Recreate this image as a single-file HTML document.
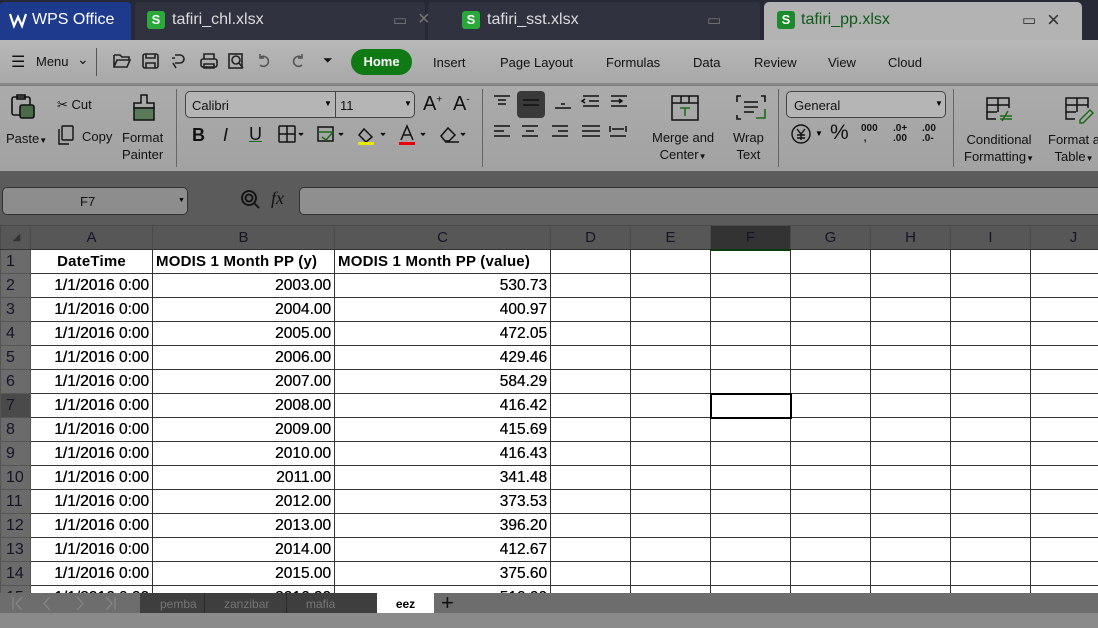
<!DOCTYPE html>
<html><head><meta charset="utf-8"><style>
*{margin:0;padding:0;box-sizing:border-box}
body{width:1098px;height:628px;overflow:hidden;position:relative;font-family:"Liberation Sans",sans-serif;background:#7a7a7a}
.a{position:absolute}
.t{font-size:13px;color:#111}
svg{position:absolute;overflow:visible}
table{border-collapse:collapse;table-layout:fixed;position:absolute;left:0;top:225px}
td{border:1px solid #333;height:24px;font-size:15.5px;color:#000;background:#fff;padding:0 3px;white-space:nowrap;overflow:hidden;text-shadow:0.3px 0 0 #000}
td.h{background:#6b6b6b;color:#15152a;text-align:left;padding-left:5px;border-color:#555;font-size:16px;text-shadow:none}
tr.ch td{background:#575757;color:#15152a;text-align:center;border-color:#4a4a4a;border-bottom:1px solid #333;font-size:15px;text-shadow:none}
td.r{text-align:right}
td.c{text-align:center}
tr.hd td:not(.h){font-weight:bold;font-size:15px;letter-spacing:0.2px;text-shadow:none}
</style></head><body>
<!-- tab bar -->
<div class="a" style="left:0;top:0;width:1098px;height:40px;background:#272a36"></div>
<div class="a" style="left:0;top:2px;width:131px;height:38px;background:#1e3a8c;border-radius:4px 4px 0 0"></div>
<svg style="left:9px;top:13px" width="18" height="14"><path d="M1 1 L5 13 L9 4 L13 13 L17 1" fill="none" stroke="#fff" stroke-width="2.2"/></svg>
<div class="a" style="left:32px;top:11px;color:#fff;font-size:16px">WPS Office</div>
<div class="a" style="left:135px;top:2px;width:290px;height:38px;background:#30333f;border-radius:4px 4px 0 0"></div>
<div class="a" style="left:147px;top:11px;width:18px;height:18px;background:#2aa83a;border-radius:3px;color:#fff;font-size:13px;text-align:center;line-height:18px;font-weight:bold">S</div>
<div class="a" style="left:172px;top:11px;color:#ddd;font-size:16px">tafiri_chl.xlsx</div>
<div class="a" style="left:393px;top:11px;color:#777;font-size:15px">▭</div>
<div class="a" style="left:418px;top:8px;color:#777;font-size:20px">×</div>
<div class="a" style="left:428px;top:2px;width:332px;height:38px;background:#30333f;border-radius:4px 4px 0 0"></div>
<div class="a" style="left:462px;top:11px;width:18px;height:18px;background:#2aa83a;border-radius:3px;color:#fff;font-size:13px;text-align:center;line-height:18px;font-weight:bold">S</div>
<div class="a" style="left:487px;top:11px;color:#ddd;font-size:16px">tafiri_sst.xlsx</div>
<div class="a" style="left:707px;top:11px;color:#777;font-size:15px">▭</div>
<div class="a" style="left:764px;top:2px;width:318px;height:40px;background:#b3b3b3;border-radius:5px 5px 0 0"></div>
<div class="a" style="left:777px;top:11px;width:18px;height:18px;background:#1a8a2a;border-radius:3px;color:#fff;font-size:13px;text-align:center;line-height:18px;font-weight:bold">S</div>
<div class="a" style="left:801px;top:11px;color:#0d5a1a;font-size:16px">tafiri_pp.xlsx</div>
<div class="a" style="left:1022px;top:11px;color:#333;font-size:15px">▭</div>
<div class="a" style="left:1047px;top:7px;color:#333;font-size:22px">×</div>
<!-- menu row -->
<div class="a" style="left:0;top:40px;width:1098px;height:45px;background:linear-gradient(#b8b8b8,#a8a8a8);border-bottom:2px solid #8a8a8a"></div>
<div class="a t" style="left:11px;top:52px;font-size:16px">☰</div>
<div class="a t" style="left:36px;top:54px">Menu</div>
<div class="a t" style="left:77px;top:51px;font-size:14px">⌄</div>
<div class="a" style="left:96px;top:48px;width:1px;height:28px;background:#555"></div>
<svg style="left:113px;top:52px" width="160" height="18" fill="none" stroke="#222" stroke-width="1.6">
<path d="M1 3h6l2 2h7v3M1 3v12h13l3-7H4l-3 7"/>
<rect x="30" y="2" width="15" height="14" rx="2"/><path d="M33 2v4h9V2M33 16v-5h9v5"/>
<path d="M62 3h5a4 4 0 0 1 0 8h-5M60 11l3 5M59 6h3"/>
<rect x="88" y="7" width="16" height="8" rx="2"/><path d="M91 7V2h10v5M91 12h10v4H91z"/>
<rect x="116" y="2" width="13" height="14"/><circle cx="123" cy="8" r="4"/><path d="M126 11l4 5"/>
<path d="M148 5a5 5 0 1 1-1 8M147 2v4h4" stroke="#555"/>
</svg>
<svg style="left:288px;top:52px" width="20" height="18" fill="none" stroke="#555" stroke-width="1.6"><path d="M13 5a5 5 0 1 0 1 8M14 2v4h-4"/></svg>
<div class="a t" style="left:323px;top:53px;font-size:12px">⏷</div>
<div class="a" style="left:351px;top:49px;width:61px;height:26px;background:#0f7a14;border-radius:13px;color:#fff;font-weight:bold;font-size:13px;text-align:center;line-height:26px">Home</div>
<div class="a t" style="left:433px;top:55px">Insert</div>
<div class="a t" style="left:500px;top:55px">Page Layout</div>
<div class="a t" style="left:606px;top:55px">Formulas</div>
<div class="a t" style="left:693px;top:55px">Data</div>
<div class="a t" style="left:754px;top:55px">Review</div>
<div class="a t" style="left:828px;top:55px">View</div>
<div class="a t" style="left:888px;top:55px">Cloud</div>
<!-- ribbon -->
<div class="a" style="left:0;top:86px;width:1098px;height:85px;background:linear-gradient(#ababab,#a2a2a2)"></div>
<svg style="left:11px;top:94px" width="24" height="26" fill="none" stroke="#111" stroke-width="1.6"><rect x="1" y="3" width="18" height="18" rx="2"/><rect x="6" y="1" width="8" height="4"/><rect x="9" y="11" width="14" height="13" rx="2" fill="#4a6a4a"/></svg>
<div class="a t" style="left:6px;top:131px">Paste<span style="font-size:8px">▼</span></div>
<div class="a t" style="left:57px;top:97px">✂ Cut</div>
<svg style="left:58px;top:125px" width="16" height="20" fill="none" stroke="#111" stroke-width="1.4"><rect x="4" y="1" width="11" height="14" rx="1"/><path d="M1 4v15h10"/></svg>
<div class="a t" style="left:82px;top:129px">Copy</div>
<svg style="left:131px;top:94px" width="26" height="28" fill="none" stroke="#111" stroke-width="1.5"><path d="M10 1h6v8h7v5H3V9h7z"/><rect x="3" y="14" width="20" height="12" fill="#5a7a5a"/></svg>
<div class="a t" style="left:122px;top:129px;text-align:center;line-height:17px">Format<br>Painter</div>
<div class="a" style="left:176px;top:89px;width:1px;height:78px;background:#666"></div>
<div class="a" style="left:185px;top:91px;width:230px;height:27px;border:1px solid #444;border-radius:5px;background:#b5b5b5"></div>
<div class="a" style="left:335px;top:91px;width:1px;height:27px;background:#444"></div>
<div class="a t" style="left:192px;top:98px">Calibri</div>
<div class="a t" style="left:340px;top:98px">11</div>
<div class="a" style="left:324px;top:99px;font-size:8px">▼</div>
<div class="a" style="left:404px;top:99px;font-size:8px">▼</div>
<div class="a t" style="left:423px;top:93px;font-size:20px">A<sup style="font-size:10px">+</sup></div>
<div class="a t" style="left:453px;top:93px;font-size:20px">A<sup style="font-size:10px">-</sup></div>
<div class="a t" style="left:192px;top:125px;font-size:18px;font-weight:bold">B</div>
<div class="a t" style="left:223px;top:125px;font-size:18px;font-style:italic">I</div>
<div class="a t" style="left:249px;top:124px;font-size:18px;text-decoration:underline;text-decoration-color:#1a6a1a">U</div>
<svg style="left:278px;top:125px" width="200" height="22" fill="none" stroke="#111" stroke-width="1.5">
<rect x="1" y="1" width="16" height="16" rx="1"/><path d="M9 1v16M1 9h16"/><path d="M21 8l2 2 2-2" fill="#111"/>
<rect x="40" y="2" width="15" height="14"/><path d="M40 7h15M44 12l4 3 7-8" stroke="#1a6a1a"/><path d="M61 8l2 2 2-2" fill="#111"/>
<path d="M86 4l8 8-6 5-7-7z"/><rect x="80" y="17" width="16" height="3" fill="#e8e800" stroke="none"/><path d="M103 8l2 2 2-2" fill="#111"/>
<path d="M123 15l6-14 6 14M125 10h8"/><rect x="121" y="17" width="16" height="3" fill="#e00" stroke="none"/><path d="M143 8l2 2 2-2" fill="#111"/>
<path d="M163 11l7-8 7 7-6 6h-4z M167 17h14"/><path d="M183 8l2 2 2-2" fill="#111"/>
</svg>
<div class="a" style="left:482px;top:89px;width:1px;height:78px;background:#666"></div>
<svg style="left:492px;top:94px" width="140" height="56" fill="none" stroke="#111" stroke-width="1.5">
<path d="M2 2h16M6 6h8M6 10h8"/>
<rect x="25" y="-3" width="28" height="27" rx="4" fill="#3a3a3a" stroke="none"/><path d="M31 6h16M31 11h16" stroke="#111"/>
<path d="M63 14h16M69 10h4"/>
<path d="M91 2h16M97 7h10M91 12h16M93 5l-3 2 3 2" stroke="#111"/>
<path d="M119 2h16M119 7h10M119 12h16M127 5l3 2-3 2" stroke="#111"/>
<path d="M2 32h16M2 37h10M2 42h16"/>
<path d="M30 32h16M34 37h8M30 42h16"/>
<path d="M60 32h16M66 37h10M60 42h16"/>
<path d="M90 32h18M90 37h18M90 42h18"/>
<path d="M118 32v6M134 32v6M120 35h12M118 42h16" stroke="#111"/>
</svg>
<svg style="left:671px;top:95px" width="28" height="28" fill="none" stroke="#111" stroke-width="1.5"><rect x="1" y="1" width="26" height="24"/><path d="M1 8h26M10 1v7M18 1v7"/><path d="M9 13h10M14 13v8" stroke="#1a6a1a"/></svg>
<div class="a t" style="left:652px;top:129px;text-align:center;line-height:17px">Merge and<br>Center<span style="font-size:8px">▼</span></div>
<svg style="left:736px;top:95px" width="30" height="28" fill="none" stroke="#111" stroke-width="1.6"><path d="M5 1H1v6M25 1h4v6M1 20v4h4M8 7h14M8 12h14M8 17h10"/><path d="M29 14v9H20" stroke="#1a6a1a"/></svg>
<div class="a t" style="left:733px;top:129px;text-align:center;line-height:17px">Wrap<br>Text</div>
<div class="a" style="left:778px;top:89px;width:1px;height:78px;background:#666"></div>
<div class="a" style="left:786px;top:91px;width:160px;height:27px;border:1px solid #444;border-radius:5px;background:#b5b5b5"></div>
<div class="a t" style="left:794px;top:98px">General</div>
<div class="a" style="left:935px;top:99px;font-size:8px">▼</div>
<svg style="left:791px;top:124px" width="20" height="20" fill="none" stroke="#111" stroke-width="1.4"><circle cx="10" cy="10" r="9"/><path d="M6 5l4 5 4-5M10 10v6M6 11h8M6 14h8"/></svg>
<div class="a" style="left:815px;top:129px;font-size:8px">▼</div>
<div class="a t" style="left:830px;top:121px;font-size:21px">%</div>
<div class="a t" style="left:861px;top:124px;font-size:10px;font-weight:bold;line-height:10px">000<br>&nbsp;,</div>
<div class="a t" style="left:893px;top:124px;font-size:10px;font-weight:bold;line-height:10px">.0+<br>.00</div>
<div class="a t" style="left:922px;top:124px;font-size:10px;font-weight:bold;line-height:10px">.00<br>.0-</div>
<div class="a" style="left:953px;top:89px;width:1px;height:78px;background:#666"></div>
<svg style="left:986px;top:97px" width="30" height="26" fill="none" stroke="#111" stroke-width="1.5"><path d="M10 22H1V1h22v10M1 8h22M1 15h10M12 1v14"/><path d="M14 19h12M16 24l6-10M14 22h12" stroke="#1a6a1a"/></svg>
<div class="a t" style="left:964px;top:131px;text-align:center;line-height:17px">Conditional<br>Formatting<span style="font-size:8px">▼</span></div>
<svg style="left:1065px;top:97px" width="30" height="26" fill="none" stroke="#111" stroke-width="1.5"><path d="M10 22H1V1h22v10M1 8h22M1 15h10M12 1v14"/><path d="M15 23l10-10 3 3-10 10h-3z" stroke="#1a6a1a"/></svg>
<div class="a t" style="left:1048px;top:131px;text-align:center;line-height:17px;white-space:nowrap">Format a<br>Table<span style="font-size:8px">▼</span></div>
<!-- formula bar -->
<div class="a" style="left:0;top:171px;width:1098px;height:54px;background:#5b5b5b"></div>
<div class="a" style="left:2px;top:187px;width:186px;height:28px;background:#8d8d8d;border:1px solid #333;border-radius:5px"></div>
<div class="a t" style="left:80px;top:194px">F7</div>
<div class="a" style="left:178px;top:197px;font-size:7px">▼</div>
<svg style="left:241px;top:190px" width="22" height="22" fill="none" stroke="#111" stroke-width="1.8"><circle cx="8" cy="8" r="7"/><circle cx="8" cy="8" r="3.5"/><path d="M13 13l5 5"/></svg>
<div class="a t" style="left:271px;top:188px;font-size:18px;font-style:italic;font-family:'Liberation Serif',serif">fx</div>
<div class="a" style="left:299px;top:187px;width:810px;height:28px;background:#8f8f8f;border:1px solid #333;border-radius:5px"></div>
<!-- grid -->
<table style="width:1116px">
<colgroup><col style="width:30px"><col style="width:122px"><col style="width:182px"><col style="width:216px"><col style="width:80px"><col style="width:80px"><col style="width:80px"><col style="width:80px"><col style="width:80px"><col style="width:80px"><col style="width:86px"></colgroup>
<tr class="ch"><td class="h" style="background:#575757;font-size:10px;color:#333">◢</td><td>A</td><td>B</td><td>C</td><td>D</td><td>E</td><td style="background:#333;border-bottom:2px solid #0a3a0a">F</td><td>G</td><td>H</td><td>I</td><td>J</td></tr>
<tr class="hd"><td class="h">1</td><td class="c">DateTime</td><td>MODIS 1 Month PP (y)</td><td>MODIS 1 Month PP (value)</td><td></td><td></td><td></td><td></td><td></td><td></td><td></td></tr>
<tr><td class="h">2</td><td class="r">1/1/2016 0:00</td><td class="r">2003.00</td><td class="r">530.73</td><td></td><td></td><td></td><td></td><td></td><td></td><td></td></tr>
<tr><td class="h">3</td><td class="r">1/1/2016 0:00</td><td class="r">2004.00</td><td class="r">400.97</td><td></td><td></td><td></td><td></td><td></td><td></td><td></td></tr>
<tr><td class="h">4</td><td class="r">1/1/2016 0:00</td><td class="r">2005.00</td><td class="r">472.05</td><td></td><td></td><td></td><td></td><td></td><td></td><td></td></tr>
<tr><td class="h">5</td><td class="r">1/1/2016 0:00</td><td class="r">2006.00</td><td class="r">429.46</td><td></td><td></td><td></td><td></td><td></td><td></td><td></td></tr>
<tr><td class="h">6</td><td class="r">1/1/2016 0:00</td><td class="r">2007.00</td><td class="r">584.29</td><td></td><td></td><td></td><td></td><td></td><td></td><td></td></tr>
<tr><td class="h" style="background:#4a4a4a">7</td><td class="r">1/1/2016 0:00</td><td class="r">2008.00</td><td class="r">416.42</td><td></td><td></td><td style="border:2px solid #000"></td><td></td><td></td><td></td><td></td></tr>
<tr><td class="h">8</td><td class="r">1/1/2016 0:00</td><td class="r">2009.00</td><td class="r">415.69</td><td></td><td></td><td></td><td></td><td></td><td></td><td></td></tr>
<tr><td class="h">9</td><td class="r">1/1/2016 0:00</td><td class="r">2010.00</td><td class="r">416.43</td><td></td><td></td><td></td><td></td><td></td><td></td><td></td></tr>
<tr><td class="h">10</td><td class="r">1/1/2016 0:00</td><td class="r">2011.00</td><td class="r">341.48</td><td></td><td></td><td></td><td></td><td></td><td></td><td></td></tr>
<tr><td class="h">11</td><td class="r">1/1/2016 0:00</td><td class="r">2012.00</td><td class="r">373.53</td><td></td><td></td><td></td><td></td><td></td><td></td><td></td></tr>
<tr><td class="h">12</td><td class="r">1/1/2016 0:00</td><td class="r">2013.00</td><td class="r">396.20</td><td></td><td></td><td></td><td></td><td></td><td></td><td></td></tr>
<tr><td class="h">13</td><td class="r">1/1/2016 0:00</td><td class="r">2014.00</td><td class="r">412.67</td><td></td><td></td><td></td><td></td><td></td><td></td><td></td></tr>
<tr><td class="h">14</td><td class="r">1/1/2016 0:00</td><td class="r">2015.00</td><td class="r">375.60</td><td></td><td></td><td></td><td></td><td></td><td></td><td></td></tr>
<tr><td class="h">15</td><td class="r">1/1/2016 0:00</td><td class="r">2016.00</td><td class="r">510.00</td><td></td><td></td><td></td><td></td><td></td><td></td><td></td></tr>
</table>
<!-- sheet tabs -->
<div class="a" style="left:0;top:593px;width:1098px;height:20px;background:#6d6d6d"></div>
<svg style="left:12px;top:597px" width="110" height="14" fill="none" stroke="#888" stroke-width="1.2"><path d="M1 0v13M10 0l-6 6.5 6 6.5M38 0l-6 6.5 6 6.5M65 0l6 6.5-6 6.5M94 0l6 6.5-6 6.5M103 0v13"/></svg>
<div class="a" style="left:140px;top:593px;width:237px;height:20px;background:#3e3e3e"></div>
<div class="a" style="left:204px;top:593px;width:1px;height:20px;background:#2a2a2a"></div>
<div class="a" style="left:286px;top:593px;width:1px;height:20px;background:#2a2a2a"></div>
<div class="a" style="left:160px;top:597px;font-size:12px;color:#777">pemba</div>
<div class="a" style="left:224px;top:597px;font-size:12px;color:#777">zanzibar</div>
<div class="a" style="left:306px;top:597px;font-size:12px;color:#777">mafia</div>
<div class="a" style="left:377px;top:593px;width:57px;height:20px;background:#fff;text-align:center;font-size:12px;font-weight:bold;line-height:22px;color:#000">eez</div>
<div class="a" style="left:441px;top:590px;font-size:22px;color:#111">+</div>
<div class="a" style="left:0;top:613px;width:1098px;height:15px;background:#8a8a8a"></div>
</body></html>
